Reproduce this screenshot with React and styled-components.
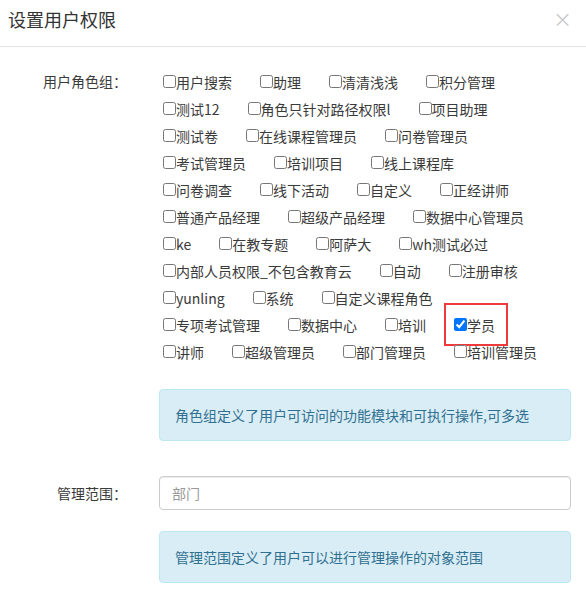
import styled, { createGlobalStyle } from 'styled-components';

const GlobalStyle = createGlobalStyle`
  * { box-sizing: border-box; }
  body {
    margin: 0;
    background: #ffffff;
    font-family: "Noto Sans CJK SC", "Noto Sans", sans-serif;
    font-size: 14px;
    color: #3a3a3a;
  }
`;

const roles = [
  '用户搜索', '助理', '清清浅浅', '积分管理',
  '测试12', '角色只针对路径权限l', '项目助理',
  '测试卷', '在线课程管理员', '问卷管理员',
  '考试管理员', '培训项目', '线上课程库',
  '问卷调查', '线下活动', '自定义', '正经讲师',
  '普通产品经理', '超级产品经理', '数据中心管理员',
  'ke', '在教专题', '阿萨大', 'wh测试必过',
  '内部人员权限_不包含教育云', '自动', '注册审核',
  'yunling', '系统', '自定义课程角色',
  '专项考试管理', '数据中心', '培训', '学员',
  '讲师', '超级管理员', '部门管理员', '培训管理员',
];

const Modal = styled.div`
  width: 586px;
  min-height: 596px;
  background: #ffffff;
`;

const Header = styled.div`
  display: flex;
  align-items: center;
  justify-content: space-between;
  height: 47px;
  padding: 0 14px 9px 8px;
  border-bottom: 1px solid #e5e5e5;
`;

const Title = styled.h4`
  margin: 0;
  font-size: 18px;
  font-weight: 400;
  line-height: 26px;
  color: #333333;
`;

const Close = styled.span`
  font-size: 19px;
  line-height: 20px;
  color: #c8c8c8;
  cursor: pointer;
`;

const Body = styled.div`
  padding: 21px 15px 0 0;
`;

const FormRow = styled.div`
  display: grid;
  grid-template-columns: 127px 412px;
  column-gap: 32px;
  margin-bottom: ${(p) => p.$gap || 0}px;
`;

const Label = styled.label`
  text-align: right;
  line-height: ${(p) => p.$lh}px;
  color: #3a3a3a;
`;

const CheckGroup = styled.div`
  display: flex;
  flex-wrap: wrap;
  margin-bottom: 24px;
`;

const CheckItem = styled.label`
  position: relative;
  display: inline-flex;
  align-items: center;
  height: 27px;
  margin-right: 24px;
  white-space: nowrap;
  color: #3a3a3a;
`;

const Box = styled.input`
  width: 13px;
  height: 13px;
  margin: 0 0 0 4px;
`;

const Highlight = styled.span`
  position: absolute;
  left: -6px;
  top: -8px;
  width: 64px;
  height: 43px;
  border: 2px solid #ee3a3a;
  pointer-events: none;
`;

const Alert = styled.div`
  grid-column: 2;
  padding: 15px;
  line-height: 20px;
  color: #31708f;
  background: #d9edf7;
  border: 1px solid #bce8f1;
  border-radius: 4px;
  margin-bottom: ${(p) => p.$mb || 0}px;
`;

const Input = styled.input`
  width: 100%;
  height: 34px;
  padding: 6px 12px;
  font-family: inherit;
  font-size: 14px;
  color: #555555;
  border: 1px solid #cccccc;
  border-radius: 4px;
  box-shadow: inset 0 1px 1px rgba(0, 0, 0, 0.075);
  outline: none;
  &::placeholder {
    color: #999999;
  }
`;

export default function App() {
  return (
    <Modal>
      <GlobalStyle />
      <Header>
        <Title>设置用户权限</Title>
        <Close>×</Close>
      </Header>
      <Body>
        <FormRow>
          <Label $lh={27}>用户角色组：</Label>
          <div>
            <CheckGroup>
              {roles.map((r) => (
                <CheckItem key={r}>
                  {r === '学员' && <Highlight />}
                  <Box type="checkbox" defaultChecked={r === '学员'} />
                  {r}
                </CheckItem>
              ))}
            </CheckGroup>
          </div>
          <Alert $mb={35}>角色组定义了用户可访问的功能模块和可执行操作,可多选</Alert>
        </FormRow>
        <FormRow $gap={21}>
          <Label $lh={34}>管理范围：</Label>
          <Input placeholder="部门" />
        </FormRow>
        <FormRow>
          <Alert>管理范围定义了用户可以进行管理操作的对象范围</Alert>
        </FormRow>
      </Body>
    </Modal>
  );
}
